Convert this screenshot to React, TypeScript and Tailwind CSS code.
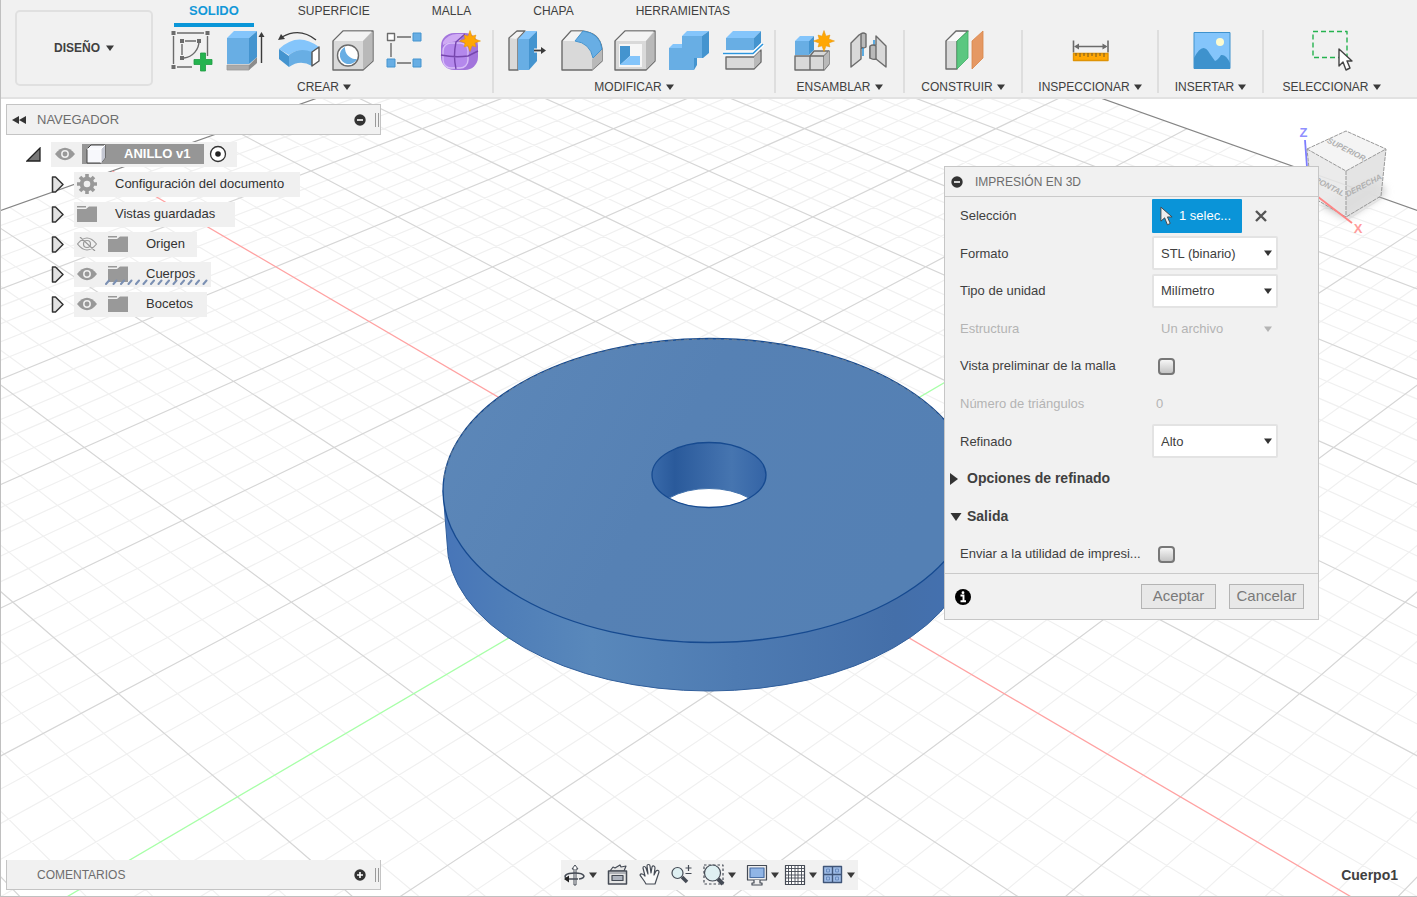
import React from "react";

type IconProps = { children: React.ReactNode; label: string };

const LINE = "#6b6b6b";
const BLUE = "#68aee4";
const BLUE_TOP = "#84c5fb";
const BLUE_SIDE = "#4494cf";
const GRAY = "#d9d9d9";
const GRAY_TOP = "#f3f3f3";
const GRAY_SIDE = "#b9b9b9";

function star(cx: number, cy: number, r: number) {
  const pts: string[] = [];
  for (let i = 0; i < 16; i++) {
    const radius = i % 2 ? r * 0.5 : i % 4 ? r * 0.8 : r;
    const a = (i * Math.PI) / 8 - Math.PI / 2;
    pts.push(`${cx + radius * Math.cos(a)},${cy + radius * Math.sin(a)}`);
  }
  return pts.join(" ");
}

function Caret({ className = "text-[#3a3a3a]" }: { className?: string }) {
  return (
    <svg viewBox="0 0 8 6" className={`h-[6px] w-[8px] shrink-0 ${className}`} aria-hidden="true">
      <path d="M0 0.5h8L4 6z" fill="currentColor" />
    </svg>
  );
}

function Tool({ children, label }: IconProps) {
  return (
    <button type="button" aria-label={label} className="h-10 w-10 shrink-0">
      <svg viewBox="0 0 40 40" className="h-10 w-10 overflow-visible" fill="none" stroke={LINE} strokeWidth="1.4" strokeLinejoin="round">
        {children}
      </svg>
    </button>
  );
}

function Group({ name, width, last, children }: { name: string; width: string; last?: boolean; children: React.ReactNode }) {
  return (
    <section className={`flex h-[63px] flex-col items-center ${width} ${last ? "" : "border-r-2 border-[#dedede]"}`}>
      <div className="flex gap-[14px] pt-px">{children}</div>
      <button type="button" className="mt-2 flex items-center gap-1 text-[12px] leading-4 whitespace-nowrap">
        {name}
        <Caret />
      </button>
    </section>
  );
}

function Ribbon() {
  return (
    <header className="flex items-start overflow-hidden border-b-2 border-[#e2e2e2] bg-[#f1f1f1] text-[#404040]">
      <button
        type="button"
        className="mt-[10px] ml-[14px] flex h-[76px] w-[138px] shrink-0 items-center justify-center gap-[6px] rounded-[5px] border-2 border-[#e0e0e0] text-[12px] font-bold"
      >
        DISEÑO
        <Caret />
      </button>
      <div className="flex flex-col pl-[3px]">
        <nav className="flex gap-[2px] pl-[18px] text-[12px]">
          <button type="button" className="mr-3 border-b-4 border-[#0a96d8] px-[15px] pt-[3px] pb-1 text-[13px] leading-4 font-bold text-[#1398d8]">
            SOLIDO
          </button>
          {["SUPERFICIE", "MALLA", "CHAPA", "HERRAMIENTAS"].map((t) => (
            <button key={t} type="button" className="px-[30px] pt-[3px] pb-2 leading-4">
              {t}
            </button>
          ))}
        </nav>
        <div className="flex pt-[3px] pb-1">
          <Group name="CREAR" width="w-[338px]">
            <Tool label="Crear boceto">
              <path d="M8 2h27M38.500 5v20M4.500 5v28M8 36h15M13 13v11M16 10h11M30 10a17 17 0 0 1-15 17" />
              <g fill="#6b6b6b" stroke="none">
                <path d="M2.500 0h4v4h-4zM36.500 0h4v4h-4zM2.500 34h4v4h-4zM11 8h4v4h-4zM28 8h4v4h-4zM11 25h4v4h-4z" />
              </g>
              <path d="M31.500 22h5v6.500h6.500v5h-6.500v6.500h-5v-6.500H25v-5h6.500z" fill="#25b34f" stroke="#1d9c43" strokeWidth=".8" />
            </Tool>
            <Tool label="Extruir">
              <path d="M4 34h22v5H4z" fill="#aaa" stroke="#999" strokeWidth=".8" />
              <path d="M26 34l8-8v6l-8 7z" fill="#8c8c8c" stroke="none" />
              <path d="M4 7h22v26H4z" fill={BLUE} stroke="none" />
              <path d="M4 7l7-7h23l-8 7z" fill={BLUE_TOP} stroke="none" />
              <path d="M26 7l8-7v26l-8 7z" fill={BLUE_SIDE} stroke="none" />
              <path d="M38.500 32V4" stroke="#3b3b3b" />
              <path d="M38.500 1l3 5h-6z" fill="#3b3b3b" stroke="none" />
            </Tool>
            <Tool label="Revolución">
              <path d="M2 18Q21 0 42 16l-7 6Q21 16 12 24z" fill={BLUE_TOP} stroke="none" />
              <path d="M2 18l10 7v11L2 28z" fill={BLUE_SIDE} stroke="none" />
              <path d="M12 24Q22 16 35 21v14q-12-7-23 1z" fill={BLUE} stroke="none" />
              <path d="M35 21l7-5v14l-7 5z" fill="#fff" stroke="#555" />
              <path d="M5 6Q23-4 39 9" stroke="#3b3b3b" />
              <path d="M1 9l3-6 4 5z" fill="#3b3b3b" stroke="none" />
            </Tool>
            <Tool label="Agujero">
              <path d="M2 10L12 0h30v30L32 39H2z" fill={GRAY} />
              <path d="M3 10l9.500-9.500h28L32 10z" fill={GRAY_TOP} stroke="none" />
              <path d="M32 10l9.500-9.500V30L32 38.500z" fill={GRAY_SIDE} stroke="none" />
              <circle cx="17" cy="24.500" r="10.500" fill="#fff" />
              <path d="M14 16a9 9 0 1 0 12 12 11 11 0 0 1-12-12z" fill={BLUE} stroke="none" />
            </Tool>
            <Tool label="Patrón rectangular">
              <path d="M12 6h14M6 12v14M12 32h14" />
              <path d="M2.500 2.500h7v7h-7z" fill="#fff" />
              <path d="M28 2h8v8h-8zM2 28h8v8H2zM28 28h8v8h-8z" fill={BLUE} stroke="#4494cf" strokeWidth="1" />
            </Tool>
            <Tool label="Crear forma">
              <rect x="2" y="2" width="37" height="37" rx="13" fill="#a274dc" stroke="none" />
              <path d="M4 11q5-8 14-8h9q-6 4-6 7-8 0-17 4z" fill="#cfaaf4" stroke="none" />
              <rect x="4" y="12" width="25" height="25" rx="8" fill="#b488ec" stroke="#d7bdf8" />
              <path d="M2 24q14 3 27 1l10-5M17 38q-3-13 0-27l9-8" stroke="#7647ae" />
              <polygon points={star(31, 10, 10.5)} fill="#ffa704" stroke="#e49304" strokeWidth=".5" />
            </Tool>
          </Group>
          <Group name="MODIFICAR" width="w-[282px]">
            <Tool label="Pulsar/tirar">
              <path d="M3 7l8-7h8L12 8v31H3z" fill={GRAY} />
              <path d="M4 7l7-6h6l-7 7z" fill={GRAY_TOP} stroke="none" />
              <path d="M12 8h11v31H12z" fill={BLUE} stroke="none" />
              <path d="M12 8l8-8h11l-8 8z" fill={BLUE_TOP} stroke="none" />
              <path d="M23 8l8-8v30l-8 9z" fill={BLUE_SIDE} stroke="none" />
              <path d="M28 19.500h8" stroke="#fff" strokeWidth="4" />
              <path d="M28 19.500h8" stroke="#3b3b3b" strokeWidth="1.800" />
              <path d="M40 19.500l-5 3.500v-7z" fill="#3b3b3b" stroke="none" />
            </Tool>
            <Tool label="Empalme">
              <path d="M2 10L11 0h11q18 2 20 18v12l-10 9H2z" fill={GRAY} />
              <path d="M3 10l8.500-9.500H23L16 10z" fill={GRAY_TOP} stroke="none" />
              <path d="M32 28l10-10v12l-10 9z" fill={GRAY_SIDE} stroke="none" />
              <path d="M15 10l8-10q17 2 19 18l-9 9Q30 12 15 10z" fill={BLUE} stroke="#4494cf" strokeWidth="1" />
            </Tool>
            <Tool label="Vaciado">
              <path d="M1 10L11 0h30v30l-9 9H1z" fill={GRAY} />
              <path d="M2 10l9.500-9.500h28L32 10z" fill={GRAY_TOP} stroke="none" />
              <path d="M32 10l8.500-9.500V30L32 38.500z" fill={GRAY_SIDE} stroke="none" />
              <path d="M5 13h23v23H5z" fill="#f6f6f6" stroke="none" />
              <path d="M6 15h10v10L6 34z" fill={BLUE_SIDE} stroke="none" />
              <path d="M6 34l10-9h10v9z" fill={BLUE_TOP} stroke="none" />
            </Tool>
            <Tool label="Combinar">
              <path d="M1 17h13V5h20v22h-8v12H1z" fill={BLUE} stroke="none" />
              <path d="M1 17l4-4h9v4zM14 5l5-5h22l-7 5z" fill={BLUE_TOP} stroke="none" />
              <path d="M34 5l7-5v22l-6 5h-1zM26 27h3v7l-3 5z" fill={BLUE_SIDE} stroke="none" />
            </Tool>
            <Tool label="Dividir cuerpo">
              <path d="M4 7h28v12H4z" fill={BLUE} stroke="none" />
              <path d="M4 7l7-7h28l-7 7z" fill={BLUE_TOP} stroke="none" />
              <path d="M32 7l7-7v12l-7 7z" fill={BLUE_SIDE} stroke="none" />
              <path d="M4 26h28l7-7v12l-7 7H4z" fill={GRAY} />
              <path d="M32 26l6-6v11l-6 6z" fill={GRAY_SIDE} stroke="none" />
              <path d="M1 22.500h30L41 13" stroke="#fff" strokeWidth="4" />
              <path d="M1 22.500h30L41 13" stroke="#2c95dc" strokeWidth="1.600" />
            </Tool>
          </Group>
          <Group name="ENSAMBLAR" width="w-[129px]">
            <Tool label="Nuevo componente">
              <path d="M2 25h15l4-5h15v13l-5 6H2z" fill={GRAY} />
              <path d="M17 25v14M17 25h14l5-5M31 25v14" />
              <path d="M31 25l5-5v13l-5 6z" fill={GRAY_SIDE} stroke="none" />
              <path d="M2 10h14v14H2z" fill={BLUE} stroke="none" />
              <path d="M2 10l5-5h14l-5 5z" fill={BLUE_TOP} stroke="none" />
              <path d="M16 10l5-5v14l-5 5z" fill={BLUE_SIDE} stroke="none" />
              <polygon points={star(31, 10, 10.5)} fill="#ffa704" stroke="#e49304" strokeWidth=".5" />
            </Tool>
            <Tool label="Unión">
              <path d="M4 12l8-8q2-2 6-1v13q-3 2-4 1v11L4 36z" fill={GRAY} />
              <path d="M14 3q2-2 5 0v13q-3 2-5 0z" fill={GRAY_SIDE} />
              <path d="M16 17v8M27 9v6" stroke="#2c95dc" strokeWidth="1.500" />
              <path d="M39 36L29 28l-6-1V16l6-2V5l10 10z" fill={GRAY} />
              <path d="M23 15q3-2 6 0v13q-3 1-6-1z" fill={GRAY_SIDE} />
            </Tool>
          </Group>
          <Group name="CONSTRUIR" width="w-[118px]">
            <Tool label="Plano desfasado">
              <path d="M3 10L13 0h12L14 10v28H3z" fill={GRAY} />
              <path d="M4 10l9.500-9H23l-9 9z" fill="#fafafa" stroke="none" />
              <path d="M14 10L25 0v27L14 38z" fill="#5bc780" stroke="#3fae63" strokeWidth=".8" />
              <path d="M29 10L40 0v27L29 38z" fill="#e59863" stroke="#d98549" strokeWidth=".8" />
            </Tool>
          </Group>
          <Group name="INSPECCIONAR" width="w-[136px]">
            <Tool label="Medir">
              <path d="M3.500 9.500v12M38 9.500v12M6 15.500h30" strokeWidth="1.600" />
              <path d="M4 15.500l5-3v6zM37.500 15.500l-5-3v6z" fill={LINE} stroke="none" />
              <path d="M3.500 22.500H38v7H3.500z" fill="#ffa704" stroke="#df9305" />
              <path d="M6 22v3M10 22v4M14 22v3M18 22v4M22 22v3M26 22v4M30 22v3M34 22v4" stroke="#725824" strokeWidth="1" />
            </Tool>
          </Group>
          <Group name="INSERTAR" width="w-[105px]">
            <Tool label="Insertar imagen">
              <path d="M3 1.500h36v36H3z" fill={BLUE_TOP} stroke="none" />
              <path d="M3 27q9-18 16-4l5 7q3-1 6-6 5-1 9 8v5.500H3z" fill="#3e92cd" stroke="none" />
              <circle cx="29" cy="11" r="4" fill="#fdfbcf" stroke="none" />
              <path d="M3 1.500h36v36H3z" stroke="#3e92cd" strokeWidth="1" />
            </Tool>
          </Group>
          <Group name="SELECCIONAR" width="w-[135px]" last>
            <Tool label="Seleccionar">
              <rect x="1" y="0.500" width="34" height="26" stroke="#25b34f" strokeDasharray="5 3" />
              <path d="M27 18v17l4-4 3 8 4-2-3-7h5z" fill="#fff" stroke="#444" />
            </Tool>
          </Group>
        </div>
      </div>
    </header>
  );
}

type Pt = [number, number];

/* Perspective of the ground plane, in major grid cells from the origin. */
function project(u: number, v: number): Pt {
  const s = 1 / (0.0037965 - 0.000205 * (u + v));
  return [709 + ((u - v) / 2) * s, -908.3 + 5.425 * s];
}

function segment(a: Pt, b: Pt) {
  return `M${a[0].toFixed(1)} ${a[1].toFixed(1)}L${b[0].toFixed(1)} ${b[1].toFixed(1)}`;
}

const EXTENT = 6;
let minorPath = "";
let majorPath = "";
for (let i = -EXTENT * 5 + 1; i <= EXTENT * 5; i++) {
  const k = i / 5;
  const d = segment(project(k, -EXTENT), project(k, EXTENT)) + segment(project(-EXTENT, k), project(EXTENT, k));
  if (i % 5) minorPath += d;
  else if (i !== 0) majorPath += d;
}
const edgePath =
  segment(project(-EXTENT, -EXTENT), project(-EXTENT, EXTENT)) + segment(project(-EXTENT, -EXTENT), project(EXTENT, -EXTENT));
const redAxis = segment(project(-EXTENT, 0), project(EXTENT, 0));
const greenAxis = segment(project(0, -EXTENT), project(0, EXTENT));

function Scene() {
  return (
    <svg
      viewBox="1 99 1416 797"
      preserveAspectRatio="xMidYMid slice"
      className="absolute inset-0 h-full w-full"
      role="img"
      aria-label="Anillo"
      fill="none"
    >
      <defs>
        <linearGradient id="top" x1="0" y1="0" x2="1" y2="0.3">
          <stop offset="0" stopColor="#5d88b9" />
          <stop offset="0.5" stopColor="#5681b4" />
          <stop offset="1" stopColor="#5480b4" />
        </linearGradient>
        <linearGradient id="side" x1="0" x2="1" y1="0" y2="0">
          <stop offset="0" stopColor="#4775b8" />
          <stop offset="0.12" stopColor="#4f7eb8" />
          <stop offset="0.28" stopColor="#5988bb" />
          <stop offset="0.55" stopColor="#4e7bb2" />
          <stop offset="0.85" stopColor="#446fa9" />
          <stop offset="1" stopColor="#4471b2" />
        </linearGradient>
        <linearGradient id="bore" x1="0" x2="1" y1="0" y2="0">
          <stop offset="0" stopColor="#396aaa" />
          <stop offset="0.2" stopColor="#2a5a9b" />
          <stop offset="0.5" stopColor="#3b6aa8" />
          <stop offset="0.7" stopColor="#4675b0" />
          <stop offset="1" stopColor="#3464a6" />
        </linearGradient>
        <clipPath id="hole">
          <ellipse cx="709" cy="475" rx="57" ry="32.5" />
        </clipPath>
      </defs>
      <path d={minorPath} stroke="#f0f0f0" strokeWidth="1.2" />
      <path d={majorPath} stroke="#d6d6d6" strokeWidth="1.2" />
      <path d={edgePath} stroke="#858585" strokeWidth="1.2" />
      <path d={redAxis} stroke="#ffa2a2" strokeWidth="1.3" />
      <path d={greenAxis} stroke="#a8ffa8" strokeWidth="1.3" />
      <path
        d="M443 490.500L447 542A262 149 0 0 0 971 542L975 490.500z"
        fill="url(#side)"
        stroke="#315f9c"
        strokeWidth="1"
      />
      <ellipse cx="709" cy="490.500" rx="266" ry="152" fill="url(#top)" stroke="#164a90" strokeWidth="1.300" />
      <path d="M444 478A266 152 0 0 1 974 478" stroke="#77848f" strokeDasharray="5 3" strokeWidth=".8" />
      <g clipPath="url(#hole)">
        <ellipse cx="709" cy="475" rx="57" ry="32.500" fill="url(#bore)" />
        <ellipse cx="709" cy="520.500" rx="56" ry="32" fill="#fff" stroke="#4473ad" strokeWidth="1" />
      </g>
      <ellipse cx="709" cy="475" rx="57" ry="32.500" stroke="#164a90" strokeWidth="1.300" />
    </svg>
  );
}

function ViewCube() {
  return (
    <svg viewBox="1295 120 100 120" className="absolute top-[21px] right-[22px] h-[120px] w-[100px]" fill="none" aria-label="Cubo de vistas">
      <defs>
        <filter id="soft" x="-30%" y="-30%" width="160%" height="160%">
          <feGaussianBlur stdDeviation="4" />
        </filter>
      </defs>
      <path d="M1320 204l26 14 40-26-12-12z" fill="#b9b9b9" filter="url(#soft)" />
      <path d="M1305 140l4 54" stroke="#7d7dff" strokeWidth="1.800" />
      <path d="M1307 149l39-18 40 18-40 22z" fill="#f3f3f3" fillOpacity=".95" />
      <path d="M1307 149l39 22v46l-34-20z" fill="#e9e9e9" fillOpacity=".92" />
      <path d="M1346 171l40-22-5 47-35 21z" fill="#e1e1e1" fillOpacity=".9" />
      <path d="M1307 149l39-18 40 18-5 47-35 21-34-20zM1307 149l39 22 40-22M1346 171v46" stroke="#999" strokeDasharray="4 1" />
      <path d="M1313 193l39 30" stroke="#ff8585" strokeWidth="1.800" />
      <g fill="#b0b0b0" className="text-[8px] font-bold italic" textAnchor="middle">
        <text x="1346" y="152" transform="rotate(27 1346 150)">SUPERIOR</text>
        <text x="1327" y="188" transform="rotate(28 1327 186)">FRONTAL</text>
        <text x="1364" y="188" transform="rotate(-28 1364 186)">DERECHA</text>
      </g>
      <g className="text-[13px] font-bold" textAnchor="middle">
        <text x="1303.500" y="137" fill="#8f8fff">Z</text>
        <text x="1358" y="233" fill="#ff9c9c">X</text>
      </g>
    </svg>
  );
}

function Eye({ hidden }: { hidden?: boolean }) {
  return (
    <svg viewBox="0 0 20 14" className="h-[14px] w-5 shrink-0" aria-hidden="true">
      {hidden ? (
        <g fill="none" stroke="#999" strokeWidth="1.200">
          <path d="M0.500 7Q10-5 19.500 7 10 19 0.500 7zM3 0l15 14" />
          <circle cx="10" cy="7" r="3.500" />
        </g>
      ) : (
        <>
          <path d="M0 7Q10-5.500 20 7 10 19.500 0 7z" fill="#999" />
          <circle cx="10" cy="7" r="3.200" fill="none" stroke="#f0f0f0" strokeWidth="1.500" />
        </>
      )}
    </svg>
  );
}

function Folder() {
  return (
    <svg viewBox="0 0 20 16" className="h-4 w-5 shrink-0" aria-hidden="true">
      <path d="M0 0h9v1.500H0zM0 3h9l3-2.500h8V16H0z" fill="#999" />
    </svg>
  );
}

function Gear() {
  return (
    <svg viewBox="0 0 20 20" className="h-5 w-5 shrink-0" aria-hidden="true">
      <g fill="none" stroke="#999">
        <circle cx="10" cy="10" r="5.300" strokeWidth="4" />
        <path d="M10 0v4M10 16v4M0 10h4M16 10h4M3 3l3 3M14 14l3 3M3 17l3-3M14 6l3-3" strokeWidth="3.600" />
      </g>
    </svg>
  );
}

function Expander() {
  return (
    <button type="button" aria-label="Expandir" className="mr-[10px] shrink-0">
      <svg viewBox="0 0 13 17" className="h-[17px] w-[13px]">
        <path d="M1.500 1h3l7.500 7.500L4.500 16h-3z" fill="#e2e2e2" stroke="#333" strokeWidth="1.500" strokeLinejoin="round" />
      </svg>
    </button>
  );
}

function Dot({ plus }: { plus?: boolean }) {
  return (
    <svg viewBox="0 0 12 12" className="h-3 w-3 shrink-0" aria-hidden="true">
      <circle cx="6" cy="6" r="5.700" fill="#333" />
      <path d={plus ? "M3 6h6M6 3v6" : "M3 6h6"} stroke="#fff" strokeWidth="1.600" />
    </svg>
  );
}

function Grip() {
  return <span className="ml-[9px] h-[14px] w-1 border-x border-[#999]" />;
}

const nodes: { name: string; icon: "gear" | "folder"; eye?: "on" | "off"; pad: string; marked?: boolean }[] = [
  { name: "Configuración del documento", icon: "gear", pad: "pr-4" },
  { name: "Vistas guardadas", icon: "folder", pad: "pr-5" },
  { name: "Origen", icon: "folder", eye: "off", pad: "pr-3" },
  { name: "Cuerpos", icon: "folder", eye: "on", pad: "pr-4", marked: true },
  { name: "Bocetos", icon: "folder", eye: "on", pad: "pr-[14px]" },
];

function Navigator() {
  return (
    <aside className="w-[375px] text-[13px] text-[#333]">
      <div className="flex h-[31px] items-center border border-[#c4c4c4] bg-[#f1f1f1] pr-px pl-[5px]">
        <svg viewBox="0 0 14 8" className="h-2 w-[14px]" aria-hidden="true">
          <path d="M7 0v8L0 4zM14 0v8L7 4z" fill="#333" />
        </svg>
        <h2 className="ml-[11px] flex-1 text-[13px] text-[#6d6d6d]">NAVEGADOR</h2>
        <button type="button" aria-label="Contraer navegador">
          <Dot />
        </button>
        <Grip />
      </div>
      <ul className="mt-[7px] flex flex-col gap-[6px] leading-6">
        <li className="flex h-6 items-center pl-5">
          <button type="button" aria-label="Contraer" className="mr-[10px]">
            <svg viewBox="0 0 15 15" className="h-[15px] w-[15px]">
              <path d="M14 1v13H1z" fill="#777" stroke="#222" strokeWidth="1.300" />
            </svg>
          </button>
          <span className="flex h-[25px] items-center bg-[#f0f0f0] pr-[10px] pl-[4px]">
            <Eye />
            <span className="ml-[7px] flex h-5 items-center bg-[#969696] pr-[14px] pl-1">
              <svg viewBox="0 0 20 20" className="mr-[18px] h-5 w-5" aria-hidden="true">
                <path d="M1 5l4-4h14v13l-4 5H1z" fill="#f7f8fc" stroke="#444" strokeLinejoin="round" />
                <path d="M15 5l4-4v13l-4 5z" fill="#c4c7d2" />
                <path d="M1 5h14v14M15 5l4-4" fill="none" stroke="#fff" />
              </svg>
              <b className="text-white">ANILLO v1</b>
            </span>
            <svg viewBox="0 0 18 18" className="ml-[5px] h-[18px] w-[18px]" aria-hidden="true">
              <circle cx="9" cy="9" r="7.500" fill="#fff" stroke="#333" strokeWidth="1.300" />
              <circle cx="9" cy="9" r="2.800" fill="#222" />
            </svg>
          </span>
        </li>
        {nodes.map((n) => (
          <li key={n.name} className="flex h-6 items-center pl-[45px]">
            <Expander />
            <span className={`relative flex h-[25px] items-center bg-[#f0f0f0] pl-[3px] ${n.pad}`}>
              {n.eye && (
                <span className="mr-[11px] flex">
                  <Eye hidden={n.eye === "off"} />
                </span>
              )}
              {n.icon === "gear" ? <Gear /> : <Folder />}
              <span className="ml-[18px]">{n.name}</span>
              {n.marked && (
                <svg viewBox="0 0 104 6" className="absolute bottom-[2px] left-[31px] h-[6px] w-[104px]" aria-hidden="true">
                  <path
                    d={Array.from({ length: 14 }, (_, i) => `M${1 + i * 7.5} 5l3-3.500`).join("")}
                    stroke="#7b90b3"
                    strokeWidth="2"
                    strokeLinecap="round"
                  />
                </svg>
              )}
            </span>
          </li>
        ))}
      </ul>
    </aside>
  );
}

function Row({ label, id, muted, children }: { label: string; id: string; muted?: boolean; children: React.ReactNode }) {
  return (
    <div className={`flex items-center pl-[15px] ${muted ? "text-[#b4b4b4]" : ""}`}>
      <label htmlFor={id} className="w-[192px] shrink-0 whitespace-nowrap">
        {label}
      </label>
      {children}
    </div>
  );
}

function Select({ id, value, disabled }: { id: string; value: string; disabled?: boolean }) {
  return (
    <span className="relative flex items-center">
      <select
        id={id}
        disabled={disabled}
        defaultValue={value}
        className="h-[34px] w-[126px] appearance-none rounded-[2px] border-2 border-[#e3e3e3] bg-white pl-[7px] text-[13px] disabled:border-transparent disabled:bg-transparent disabled:opacity-100"
      >
        <option>{value}</option>
      </select>
      <span className="pointer-events-none absolute right-[6px]">
        <Caret className={disabled ? "text-[#b4b4b4]" : "text-[#333]"} />
      </span>
    </span>
  );
}

function Check({ id }: { id: string }) {
  return (
    <input
      id={id}
      type="checkbox"
      className="ml-[6px] h-[17px] w-[17px] appearance-none rounded-[4px] border-2 border-[#777] bg-linear-to-b from-[#f6f6f6] to-[#c4c4c4]"
    />
  );
}

function PrintDialog() {
  return (
    <form
      aria-label="Impresión en 3D"
      onSubmit={(e) => e.preventDefault()}
      className="absolute top-[67px] right-[98px] w-[375px] border border-[#c6c6c6] bg-[#f1f1f1] text-[13px] text-[#404040]"
    >
      <div className="flex h-[30px] items-center border-b border-[#cacaca] pl-[6px]">
        <button type="button" aria-label="Contraer">
          <Dot />
        </button>
        <h2 className="ml-3 text-[12px] text-[#6d6d6d]">IMPRESIÓN EN 3D</h2>
      </div>
      <div className="grid h-[376px] grid-rows-10">
        <Row label="Selección" id="seleccion">
          <button id="seleccion" type="button" className="flex h-[34px] w-[90px] items-center rounded-[1px] bg-[#0a94d8] pl-2 text-white">
            <svg viewBox="0 0 14 21" className="mr-[6px] h-5 w-[13px]" aria-hidden="true">
              <path d="M1 1v15l4-3.500 3 7.500 3-1.500-3-7h5z" fill="#eee" stroke="#444" />
            </svg>
            1 selec...
          </button>
          <button type="button" aria-label="Borrar selección" className="ml-[13px]">
            <svg viewBox="0 0 12 12" className="h-3 w-3">
              <path d="M1 1l10 10M11 1L1 11" stroke="#555" strokeWidth="2.400" />
            </svg>
          </button>
        </Row>
        <Row label="Formato" id="formato">
          <Select id="formato" value="STL (binario)" />
        </Row>
        <Row label="Tipo de unidad" id="unidad">
          <Select id="unidad" value="Milímetro" />
        </Row>
        <Row label="Estructura" id="estructura" muted>
          <Select id="estructura" value="Un archivo" disabled />
        </Row>
        <Row label="Vista preliminar de la malla" id="vista">
          <Check id="vista" />
        </Row>
        <Row label="Número de triángulos" id="triangulos" muted>
          <output id="triangulos" className="pl-1">
            0
          </output>
        </Row>
        <Row label="Refinado" id="refinado">
          <Select id="refinado" value="Alto" />
        </Row>
        <button type="button" className="flex items-center pl-[5px] text-[14px] font-bold">
          <svg viewBox="0 0 8 12" className="mr-[9px] h-3 w-2" aria-hidden="true">
            <path d="M0 0l8 6-8 6z" fill="#333" />
          </svg>
          Opciones de refinado
        </button>
        <button type="button" className="flex items-center pl-[5px] text-[14px] font-bold">
          <svg viewBox="0 0 12 8" className="mr-[5px] h-2 w-3" aria-hidden="true">
            <path d="M0.500 0h11L6 8z" fill="#333" />
          </svg>
          Salida
        </button>
        <Row label="Enviar a la utilidad de impresi..." id="enviar">
          <Check id="enviar" />
        </Row>
      </div>
      <div className="flex h-[46px] items-center border-t border-[#cacaca] pr-[14px] pl-[10px] text-[15px] text-[#7a7a7a]">
        <svg viewBox="0 0 16 16" className="h-4 w-4" aria-hidden="true">
          <circle cx="8" cy="8" r="8" fill="#000" />
          <path d="M5.500 6.500h3V12M5.500 12.200h5.500" stroke="#fff" strokeWidth="1.900" fill="none" />
          <circle cx="8" cy="3.700" r="1.400" fill="#fff" />
        </svg>
        <button type="submit" className="ml-auto h-[25px] w-[75px] border border-[#b4b4b4] bg-[#e8e8e8]">
          Aceptar
        </button>
        <button type="button" className="ml-[13px] h-[25px] w-[75px] border border-[#b4b4b4] bg-[#e8e8e8]">
          Cancelar
        </button>
      </div>
    </form>
  );
}

function NavTool({ label, caret, children }: { label: string; caret?: boolean; children: React.ReactNode }) {
  return (
    <button type="button" aria-label={label} className="flex items-center gap-[3px]">
      <svg viewBox="0 0 22 22" className="h-[22px] w-[22px] overflow-visible" fill="none" stroke="#454b55" strokeWidth="1.200" strokeLinejoin="round">
        {children}
      </svg>
      {caret && <Caret />}
    </button>
  );
}

function ViewBar() {
  return (
    <div className="flex h-[30px] items-center gap-[10px] bg-[#f1f1f1] px-[3px]">
      <NavTool label="Órbita" caret>
        <path d="M10 21V5H8l3-4 3 4h-2v16z" fill="#fff" strokeWidth="1" />
        <path d="M15 15c8-1 6-6-4-6S-1 13 3 14.500M2 15h12" strokeWidth="1.600" />
        <path d="M0 15l5-3.500v7z" fill="#222" stroke="none" />
      </NavTool>
      <NavTool label="Mirar a">
        <path d="M3 7l3-4 2 1 5-3 1 2 5-1-2 5z" fill="#e6e6e6" />
        <path d="M1.500 7h18v13h-18z" fill="#e6e6e6" strokeWidth="1.500" />
        <path d="M5 11.500h11v5H5z" fill="#aeb4bf" />
        <path d="M2 9h17" stroke="#8b919b" />
      </NavTool>
      <NavTool label="Encuadre">
        <path
          d="M7 20C5 16 2 13 1 11c1-2 3-1 5 1L4 4c0-2 2-2 3 0l2 6L8 2c0-2 3-2 3 0l1 7 1-6c1-2 3-1 3 1l-1 7 2-4c1-1 3-1 3 1l-3 9-1 3z"
          fill="#fafafa"
        />
      </NavTool>
      <NavTool label="Zoom">
        <circle cx="6.500" cy="9" r="5.500" fill="#dff0f2" />
        <path d="M11 13l5 5" strokeWidth="3.500" />
        <path d="M17.500 1v6M14.500 4h6M14.500 9.500h6" />
      </NavTool>
      <NavTool label="Ajustar" caret>
        <path d="M1 1h19v19H1z" strokeDasharray="2.500 2" />
        <circle cx="9.500" cy="9" r="8" fill="#dff0f2" />
        <path d="M15 15l5 5" strokeWidth="4" />
      </NavTool>
      <div className="flex items-center gap-[5px]">
        <NavTool label="Visualización" caret>
          <path d="M1.500 1.500h19v14.500h-19z" fill="#eee" />
          <path d="M4 4h14v9.500H4z" fill="#90b5e6" stroke="#4a6fa5" />
          <path d="M8 16v3H6v2h10v-2h-2v-3" fill="#eee" />
        </NavTool>
        <NavTool label="Rejilla" caret>
          <path d="M1.500 1.500h19v19h-19z" fill="#fff" />
          <path d="M4.500 1v20M7.500 1v20M11 1v20M14 1v20M17.500 1v20M1 4.500h20M1 7.500h20M1 11h20M1 14h20M1 17.500h20" strokeWidth=".9" />
        </NavTool>
        <NavTool label="Ventanas" caret>
          <path d="M1.500 2.500h9v8h-9zM10.500 2.500h9v8h-9zM1.500 10.500h9v8h-9zM10.500 10.500h9v8h-9z" fill="#9fbce6" stroke="#3f5578" strokeWidth="1.400" />
          <path d="M4.500 5h3v3h-3zM13.500 5h3v3h-3zM4.500 13h3v3h-3zM13.500 13h3v3h-3z" stroke="#5f83b8" strokeWidth=".8" />
        </NavTool>
      </div>
    </div>
  );
}

export default function App() {
  return (
    <div className="flex min-h-screen flex-col border-b border-l border-[#c0c0c0] bg-white font-['Liberation_Sans',Arial,sans-serif]">
      <Ribbon />
      <main className="relative flex flex-1 flex-col justify-between overflow-hidden">
        <Scene />
        <ViewCube />
        <div className="relative w-fit pt-[5px] pl-[5px]">
          <Navigator />
        </div>
        <PrintDialog />
        <footer className="relative grid grid-cols-[1fr_auto_1fr] items-center pb-[6px]">
          <div className="ml-[5px] flex h-[30px] w-[375px] items-center border border-t-0 border-[#c4c4c4] bg-[#f1f1f1] pr-px pl-[30px]">
            <h2 className="flex-1 text-[12px] text-[#6d6d6d]">COMENTARIOS</h2>
            <button type="button" aria-label="Mostrar comentarios">
              <Dot plus />
            </button>
            <Grip />
          </div>
          <ViewBar />
          <p className="pr-[19px] text-right text-[14px] font-bold text-[#404040]">Cuerpo1</p>
        </footer>
      </main>
    </div>
  );
}
